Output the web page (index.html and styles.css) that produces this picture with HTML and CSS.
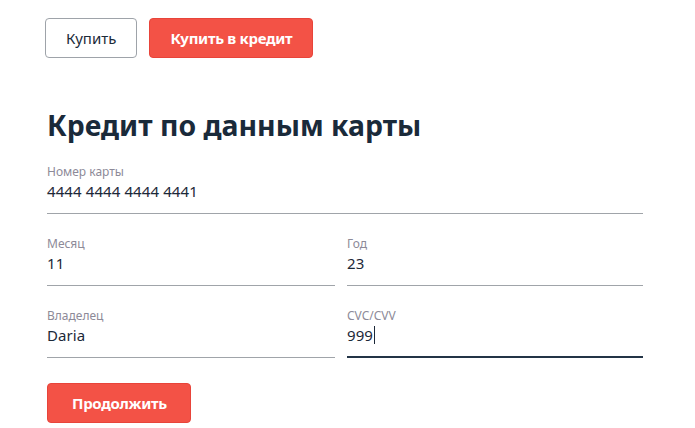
FILE: index.html
```html
<!DOCTYPE html>
<html lang="ru">
<head>
<meta charset="utf-8">
<link rel="stylesheet" href="styles.css">
</head>
<body>
<div class="page">
  <div class="actions">
    <button class="btn btn-outline">Купить</button>
    <button class="btn btn-red">Купить в кредит</button>
  </div>
  <h1 class="title">Кредит по данным карты</h1>
  <form class="form">
    <div class="field field-wide">
      <div class="label">Номер карты</div>
      <div class="value">4444 4444 4444 4441</div>
    </div>
    <div class="row">
      <div class="field">
        <div class="label">Месяц</div>
        <div class="value">11</div>
      </div>
      <div class="field">
        <div class="label">Год</div>
        <div class="value">23</div>
      </div>
    </div>
    <div class="row">
      <div class="field">
        <div class="label">Владелец</div>
        <div class="value">Daria</div>
      </div>
      <div class="field field-active">
        <div class="label">CVC/CVV</div>
        <div class="value">999<span class="caret"></span></div>
      </div>
    </div>
    <button type="button" class="btn btn-red btn-continue">Продолжить</button>
  </form>
</div>
</body>
</html>
```
FILE: styles.css
```css
* { box-sizing: border-box; }
html, body { margin: 0; padding: 0; background: #fff; }
body { font-family: "Noto Sans", "Open Sans", sans-serif; color: #1c2b3a; }
.page { padding: 18px 0 0 45px; }
.actions { display: flex; gap: 12px; }
.btn {
  height: 40px;
  padding: 0 20px;
  border-radius: 4px;
  font-family: "Noto Sans", sans-serif;
  font-size: 15px;
  line-height: 20px;
  cursor: pointer;
}
.btn-outline {
  background: #fff;
  border: 1px solid #9ea3a9;
  color: #1c2b3a;
  font-weight: 400;
}
.btn-red {
  background: #f35246;
  border: 1px solid #e8443a;
  color: #fff;
  font-weight: 700;
  letter-spacing: -0.3px;
}
.title {
  margin: 49px 0 0 2px;
  font-size: 28.4px;
  line-height: 36px;
  font-weight: 700;
  color: #1a2a3a;
}
.form { margin: 21px 0 0 2px; width: 596px; display: flex; flex-direction: column; gap: 22px; }
.row { display: grid; grid-template-columns: 288px 296px; gap: 12px; }
.field {
  display: flex;
  flex-direction: column;
  gap: 1px;
  padding-bottom: 12px;
  border-bottom: 1px solid #a0a4a9;
}
.field-active { border-bottom: 2px solid #233446; padding-bottom: 11px; }
.label { font-size: 12px; line-height: 16px; color: #8d8a98; }
.value { font-size: 15px; line-height: 20px; color: #1c2838; letter-spacing: 0.1px; display: flex; align-items: center; }
.caret { display: inline-block; width: 1px; height: 18px; background: #1c2838; margin-left: 1px; }
.btn-continue { align-self: flex-start; margin-top: 3px; padding: 0 23px 0 24px; }
```
